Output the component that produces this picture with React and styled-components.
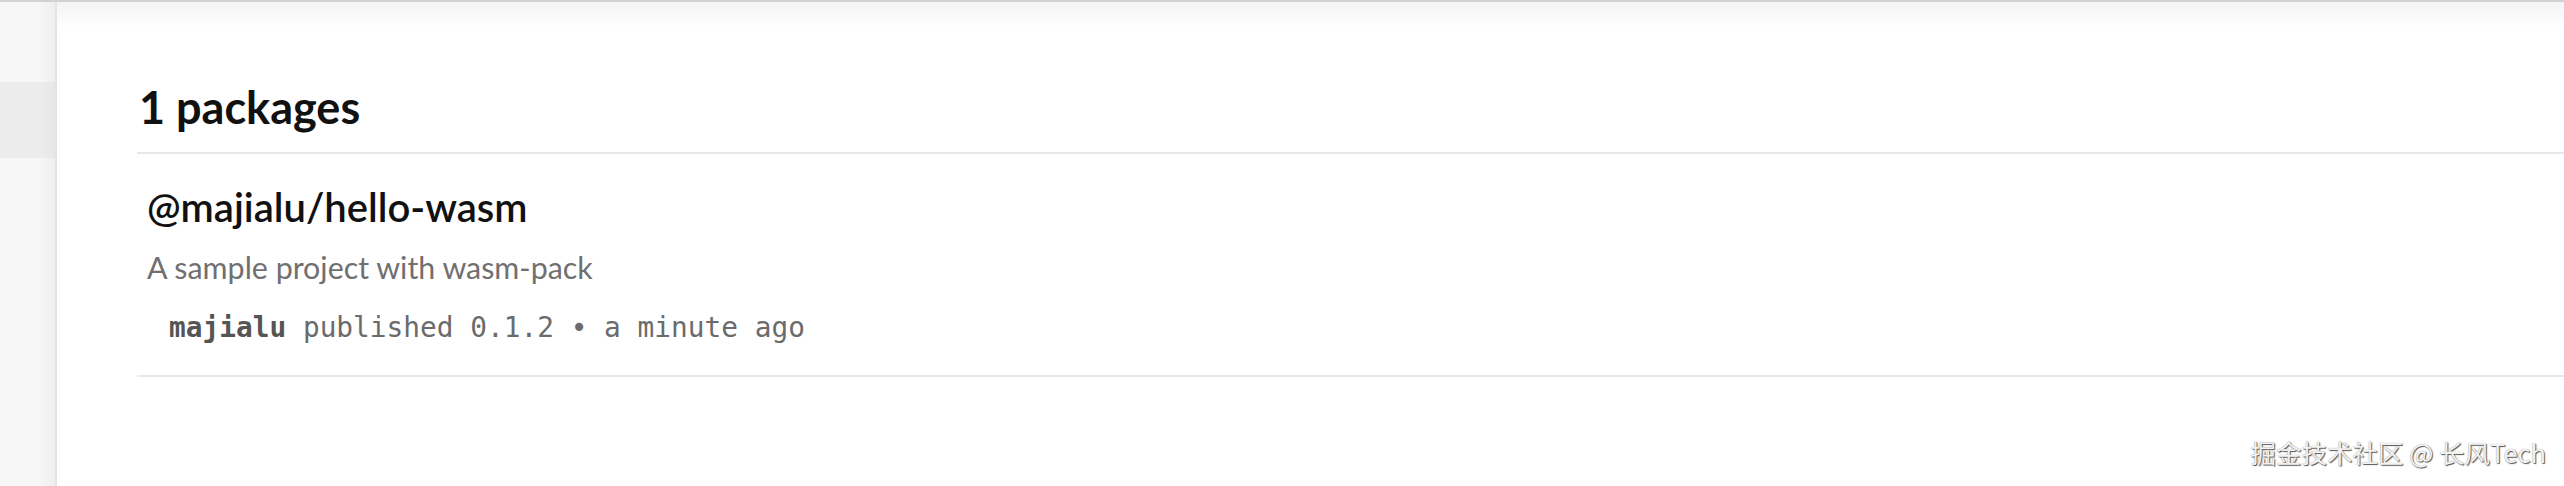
import React from "react";
import styled, { createGlobalStyle } from "styled-components";

const Global = createGlobalStyle`
  html, body { margin: 0; padding: 0; background: #fff; }
  body { font-family: Lato, "Noto Sans", sans-serif; }
`;

const Page = styled.div`
  position: relative;
  display: flex;
  width: 2564px;
  height: 486px;
  overflow: hidden;
  border-top: 2px solid #d2d2d2;
  box-sizing: border-box;
`;

const Sidebar = styled.aside`
  flex: 0 0 55px;
  display: flex;
  flex-direction: column;
  padding-top: 80px;
  background: linear-gradient(to right, #f6f6f6 0%, #f6f6f6 70%, #efefef 100%);
  border-right: 2px solid #e4e4e4;
`;

const SideBand = styled.div`
  height: 76px;
  background: linear-gradient(to right, #ececec 0%, #ececec 75%, #e6e6e6 100%);
`;

const Main = styled.main`
  flex: 1;
  display: flex;
  flex-direction: column;
  padding: 0 0 0 80px;
  background: linear-gradient(to bottom, #f3f3f3 0px, #fff 26px);
`;

const Heading = styled.h2`
  margin: 79px 0 0;
  padding: 0 0 19px 2px;
  font-family: Lato, sans-serif;
  font-weight: 700;
  font-size: 45px;
  line-height: 52px;
  color: #111;
  border-bottom: 2px solid #e8e8e8;
`;

const PackageRow = styled.section`
  display: flex;
  flex-direction: column;
  padding: 30px 0 30px 10px;
  border-bottom: 2px solid #e8e8e8;
`;

const PackageName = styled.h3`
  margin: 0;
  font-family: Lato, sans-serif;
  font-weight: 600;
  font-size: 40px;
  line-height: 46px;
  color: #111;
`;

const Description = styled.p`
  margin: 18px 0 0;
  font-family: Lato, sans-serif;
  font-weight: 400;
  font-size: 30.4px;
  line-height: 38px;
  color: #707070;
`;

const Meta = styled.div`
  margin: 25px 0 0 22px;
  font-family: "DejaVu Sans Mono", "Liberation Mono", monospace;
  font-size: 27.8px;
  line-height: 34px;
  color: #6b6b6b;
`;

const Publisher = styled.span`
  font-weight: 700;
  color: #555;
`;

const Watermark = styled.div`
  position: absolute;
  right: 18px;
  bottom: 20px;
  font-family: "Noto Sans CJK SC", "Noto Sans", sans-serif;
  font-size: 25.5px;
  line-height: 28px;
  color: #f2f2f2;
  text-shadow: 1px 1px 1px #555, 0 0 1px #888;
`;

export default function App() {
  return (
    <>
      <Global />
      <Page>
        <Sidebar>
          <SideBand />
        </Sidebar>
        <Main>
          <Heading>1 packages</Heading>
          <PackageRow>
            <PackageName>@majialu/hello-wasm</PackageName>
            <Description>A sample project with wasm-pack</Description>
            <Meta>
              <Publisher>majialu</Publisher> published 0.1.2 • a minute ago
            </Meta>
          </PackageRow>
        </Main>
        <Watermark>掘金技术社区 @ 长风Tech</Watermark>
      </Page>
    </>
  );
}
